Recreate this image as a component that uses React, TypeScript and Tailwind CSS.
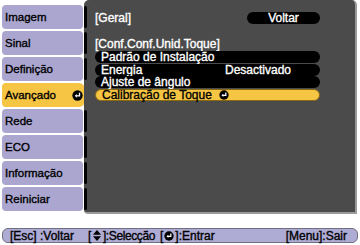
import React from "react";

const tabs = ["Imagem", "Sinal", "Definição", "Avançado", "Rede", "ECO", "Informação", "Reiniciar"];
const active = 3;

const EnterIcon = ({ size = 11 }: { size?: number }) => (
  <svg width={size} height={size} viewBox="0 0 12 12">
    <circle cx="6" cy="6" r="5.6" fill="#000" />
    <path d="M8.2 3 V6.4 H4.4" stroke="#fff" strokeWidth="1.5" fill="none" />
    <path d="M5.2 4.4 L3 6.4 L5.2 8.4 Z" fill="#fff" />
  </svg>
);

const UpDown = () => (
  <svg width="8" height="11" viewBox="0 0 8 11">
    <polygon points="4,0 8,4.8 0,4.8" fill="#000" />
    <polygon points="0,6.2 8,6.2 4,11" fill="#000" />
  </svg>
);

const rows = [
  { label: "Padrão de Instalação", value: "" },
  { label: "Energia", value: "Desactivado" },
  { label: "Ajuste de ângulo", value: "" },
];

export default function App() {
  return (
    <div
      className="w-[360px] h-[245px] bg-white overflow-hidden text-[12px] leading-[12px] [-webkit-text-stroke:0.35px]"
      style={{ fontFamily: '"Liberation Sans", Arial, sans-serif' }}
    >
      <div className="flex h-[214px]">
        <div className="w-[84px] pl-[2px] pt-[5px] flex flex-col gap-[2px]">
          {tabs.map((t, i) => (
            <div
              key={t}
              className={`w-[81px] h-[24px] rounded-[4px] flex items-center justify-between pl-[3px] pr-[2px] text-[11.5px] text-black ${
                i === active ? "bg-[#f6c544] w-[83px] rounded-r-[6px]" : "bg-[#aaa6cf]"
              }`}
            >
              <span>{t}</span>
              {i === active && <EnterIcon />}
            </div>
          ))}
        </div>
        <div className="flex-1 mr-[3px] flex bg-[#4b4b4b] rounded-t-[5px] rounded-bl-[4px] border-r-[2px] border-b-[2px] border-[#9a9a9a]">
          <div className="w-[3px] pt-[6px] flex flex-col gap-[4px]">
            {tabs.map((t, i) => (
              <div key={t} className={`h-[22px] w-[3px] rounded-full ${i === active ? "bg-transparent" : "bg-black"}`} />
            ))}
          </div>
          <div className="flex-1 pl-[8px] pr-[35px] pt-[12px] text-white">
            <div className="flex items-center justify-between h-[12px]">
              <span>[Geral]</span>
              <div className="w-[73px] h-[12px] rounded-full bg-black flex items-center justify-center">Voltar</div>
            </div>
            <div className="mt-[13px] h-[13px] flex items-center">[Conf.Conf.Unid.Toque]</div>
            <div className="mt-[1px] flex flex-col gap-[0.5px]">
              {rows.map((r) => (
                <div key={r.label} className="h-[12px] rounded-full bg-black flex items-center pl-[6px]">
                  <span className="w-[124px]">{r.label}</span>
                  <span>{r.value}</span>
                </div>
              ))}
              <div className="h-[12px] rounded-full bg-[#f6c544] border border-[#8a6a10] text-black flex items-center pl-[6px] gap-[7px]">
                <span>Calibração de Toque</span>
                <EnterIcon size={10} />
              </div>
            </div>
          </div>
        </div>
      </div>
      <div className="mt-[14px] mx-[2px] h-[15px] rounded-[6px] bg-[#aeabd4] border border-[#6f6f7f] flex items-center pl-[7px] pr-[10px] text-black">
        <span className="w-[78px] shrink-0">[Esc] :Voltar</span>
        <span className="shrink-0 flex items-center tracking-[-0.4px]">
          [<span className="mx-[2px] flex"><UpDown /></span>]:Selecção
        </span>
        <span className="ml-[5px] shrink-0 flex items-center">
          [<span className="mx-[1px] flex"><EnterIcon size={10} /></span>]:Entrar
        </span>
        <span className="ml-auto">[Menu]:Sair</span>
      </div>
    </div>
  );
}
